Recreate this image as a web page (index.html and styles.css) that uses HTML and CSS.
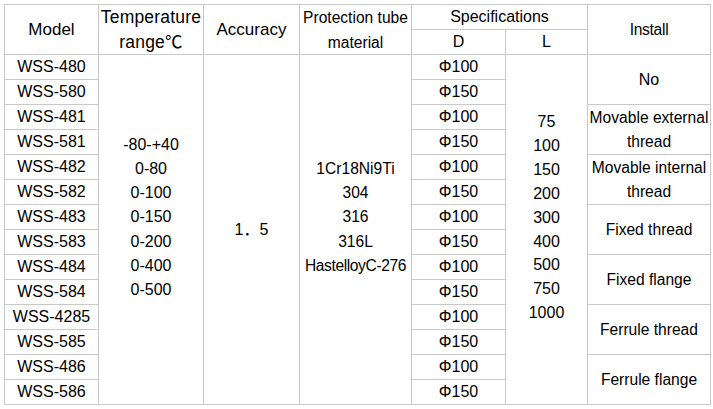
FILE: index.html
```html
<!DOCTYPE html>
<html>
<head>
<meta charset="utf-8">
<link rel="stylesheet" href="styles.css">
</head>
<body>
<div class="table">
  <div class="cell c1 span2 h17">Model</div>
  <div class="cell c2 span2 h-temp"><div>Temperature<br>range℃</div></div>
  <div class="cell c3 span2 h17">Accuracy</div>
  <div class="cell c4 span2 h-mat"><div>Protection tube<br>material</div></div>
  <div class="cell c56">Specifications</div>
  <div class="cell c7 span2 h-inst">Install</div>
  <div class="cell c5">D</div>
  <div class="cell c6">L</div>

  <div class="cell c1">WSS-480</div>
  <div class="cell c2 span14 list"><div>-80-+40<br>0-80<br>0-100<br>0-150<br>0-200<br>0-400<br>0-500<br>&nbsp;</div></div>
  <div class="cell c3 span14 acc">1．5</div>
  <div class="cell c4 span14 list mat"><div>1Cr18Ni9Ti<br>304<br>316<br>316L<br><span class="hast">HastelloyC-276</span><br>&nbsp;</div></div>
  <div class="cell c5">Φ100</div>
  <div class="cell c6 span14 list len"><div>75<br>100<br>150<br>200<br>300<br>400<br>500<br>750<br>1000<br>&nbsp;</div></div>
  <div class="cell c7 span2 no">No</div>

  <div class="cell c1">WSS-580</div>
  <div class="cell c5">Φ150</div>

  <div class="cell c1">WSS-481</div>
  <div class="cell c5">Φ100</div>
  <div class="cell c7 span2 inst2"><div>Movable external<br>thread</div></div>

  <div class="cell c1">WSS-581</div>
  <div class="cell c5">Φ150</div>

  <div class="cell c1">WSS-482</div>
  <div class="cell c5">Φ100</div>
  <div class="cell c7 span2 inst2"><div>Movable internal<br>thread</div></div>

  <div class="cell c1">WSS-582</div>
  <div class="cell c5">Φ150</div>

  <div class="cell c1">WSS-483</div>
  <div class="cell c5">Φ100</div>
  <div class="cell c7 span2 inst">Fixed thread</div>

  <div class="cell c1">WSS-583</div>
  <div class="cell c5">Φ150</div>

  <div class="cell c1">WSS-484</div>
  <div class="cell c5">Φ100</div>
  <div class="cell c7 span2 inst">Fixed flange</div>

  <div class="cell c1">WSS-584</div>
  <div class="cell c5">Φ150</div>

  <div class="cell c1">WSS-4285</div>
  <div class="cell c5">Φ100</div>
  <div class="cell c7 span2 inst">Ferrule thread</div>

  <div class="cell c1">WSS-585</div>
  <div class="cell c5">Φ150</div>

  <div class="cell c1">WSS-486</div>
  <div class="cell c5">Φ100</div>
  <div class="cell c7 span2 inst">Ferrule flange</div>

  <div class="cell c1">WSS-586</div>
  <div class="cell c5">Φ150</div>
</div>
</body>
</html>
```

FILE: styles.css
```css
html, body {
  margin: 0;
  padding: 0;
  background: #ffffff;
}
body {
  padding: 4px 0 0 4px;
  font-family: "Liberation Sans", Arial, "Noto Sans CJK SC", sans-serif;
  font-size: 16px;
  color: #000;
}
.table {
  display: grid;
  grid-template-columns: 93px 104px 95px 111px 93px 81px 122px;
  grid-template-rows: repeat(16, 24px);
  gap: 1px;
  padding: 1px;
  background: #c9c9c9;
  width: max-content;
}
.cell {
  background: #fff;
  display: flex;
  align-items: center;
  justify-content: center;
  text-align: center;
  line-height: 24px;
  white-space: nowrap;
}
.c1 { grid-column: 1; }
.c2 { grid-column: 2; }
.c3 { grid-column: 3; }
.c4 { grid-column: 4; }
.c5 { grid-column: 5; }
.c6 { grid-column: 6; }
.c56 { grid-column: 5 / 7; }
.c7 { grid-column: 7; }
.span2 { grid-row: span 2; }
.span14 { grid-row: span 14; }

.h17 { font-size: 17px; }
.h-temp { font-size: 17.5px; line-height: 25px; letter-spacing: 0.2px; }
.h-mat { font-size: 15.6px; line-height: 25px; }
.h-inst { font-size: 15.6px; letter-spacing: -0.3px; }

.list { line-height: 24.1px; }
.mat { font-size: 15.6px; line-height: 24.2px; }
.mat .hast { letter-spacing: -0.4px; }
.len { line-height: 23.9px; }
.acc { font-size: 16px; }

.no { font-size: 16px; }
.inst { font-size: 15.6px; }
.inst2 { font-size: 15.6px; line-height: 24px; }
```
